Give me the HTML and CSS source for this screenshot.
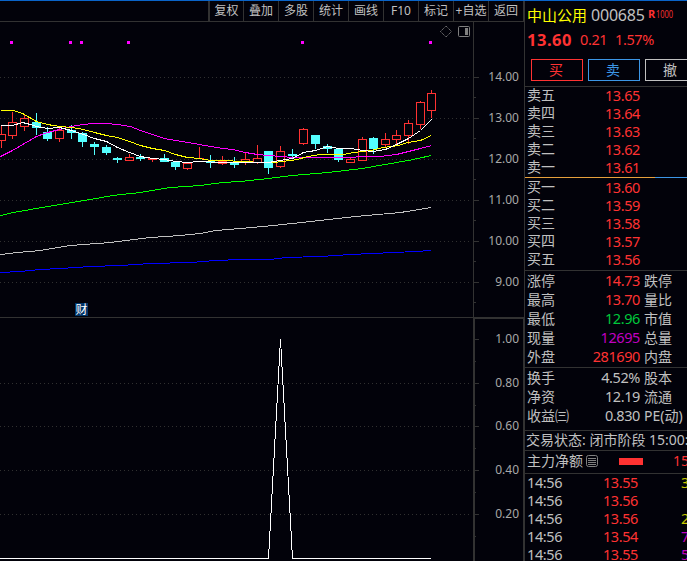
FILE: index.html
```
<!DOCTYPE html>
<html lang="zh-CN">
<head>
    <meta charset="UTF-8">
    <meta name="viewport" content="width=device-width, initial-scale=1.0">
    <title>中山公用 000685</title>
    <link rel="stylesheet" href="styles.css">
</head>
<body>
    <div class="app">
        <div class="main">
            <div class="toolbar">
                <div class="tool">复权</div>
                <div class="tool">叠加</div>
                <div class="tool">多股</div>
                <div class="tool">统计</div>
                <div class="tool">画线</div>
                <div class="tool">F10</div>
                <div class="tool">标记</div>
                <div class="tool">+自选</div>
                <div class="tool">返回</div>
            </div>

            <svg class="chart" width="524" height="295" viewBox="0 22 524 295">
                <g id="price-grid"></g>
                <path class="axis" d="M473.5 22V317"/>
                <g id="candles"></g>
                <g id="averages"></g>
                <g id="signals"></g>
                <path class="icon" d="M440.5 31.5L446 26L451.500 31.500L446 37Z" stroke-dasharray="1.2 .8"/>
                <rect class="icon" x="458.500" y="26.500" width="11" height="10" rx="1"/>
                <rect x="465" y="28" width="3" height="7" fill="#808080"/>
                <rect x="75" y="303" width="13" height="13" fill="#003468"/>
                <text class="badge" x="75.500" y="314">财</text>
            </svg>

            <svg class="chart" width="524" height="244" viewBox="0 317 524 244">
                <g id="signal-grid"></g>
                <path class="axis" d="M0 317.500H473"/>
                <path class="frame" d="M474 561V318H524V561"/>
                <path class="spike" d="M0 558.500H268.500L280.500 339L292.500 558.500H431"/>
            </svg>
        </div>

        <div class="panel">
            <div class="stock">
                <span class="stock-name">中山公用</span>
                <span class="stock-code">000685</span>
                <span class="stock-tag"><b>R</b></span>
                <span class="stock-tag narrow">1000</span>
            </div>
            <div class="quote red">
                <span class="last">13.60</span>
                <span class="change">0.21</span>
                <span class="percent">1.57%</span>
            </div>
            <div class="actions">
                <div class="action red">买</div>
                <div class="action blue">卖</div>
                <div class="action">撤</div>
            </div>

            <div class="block book sells">
                <div class="row"><span>卖五</span><span class="num red">13.65</span></div>
                <div class="row"><span>卖四</span><span class="num red">13.64</span></div>
                <div class="row"><span>卖三</span><span class="num red">13.63</span></div>
                <div class="row"><span>卖二</span><span class="num red">13.62</span></div>
                <div class="row"><span>卖一</span><span class="num red">13.61</span></div>
            </div>
            <div class="ratio"></div>
            <div class="book buys">
                <div class="row"><span>买一</span><span class="num red">13.60</span></div>
                <div class="row"><span>买二</span><span class="num red">13.59</span></div>
                <div class="row"><span>买三</span><span class="num red">13.58</span></div>
                <div class="row"><span>买四</span><span class="num red">13.57</span></div>
                <div class="row"><span>买五</span><span class="num red">13.56</span></div>
            </div>

            <div class="block stats day">
                <div class="row"><span>涨停</span><span class="num red">14.73</span><span>跌停</span></div>
                <div class="row"><span>最高</span><span class="num red">13.70</span><span>量比</span></div>
                <div class="row"><span>最低</span><span class="num green">12.96</span><span>市值</span></div>
                <div class="row"><span>现量</span><span class="num purple">12695</span><span>总量</span></div>
                <div class="row"><span>外盘</span><span class="num red">281690</span><span>内盘</span></div>
            </div>
            <div class="block stats finance">
                <div class="row"><span>换手</span><span class="num">4.52%</span><span>股本</span></div>
                <div class="row"><span>净资</span><span class="num">12.19</span><span>流通</span></div>
                <div class="row"><span>收益㈢</span><span class="num">0.830</span><span>PE(动)</span></div>
            </div>
            <div class="block status">交易状态: 闭市阶段 15:00:</div>
            <div class="block netflow">
                <span>主力净额</span>
                <svg class="list-icon" width="12" height="12" viewBox="0 0 12 12">
                    <rect x=".5" y=".5" width="11" height="11" rx="2"/>
                    <path d="M2 3.500H10M2 5.500H10M2 7.500H10M2 9.500H10"/>
                </svg>
                <span class="flow-bar"></span>
                <span class="red">15</span>
            </div>
            <div class="block ticks">
                <div class="row"><span>14:56</span><span class="num red">13.55</span><span class="vol yellow">3</span></div>
                <div class="row"><span>14:56</span><span class="num red">13.56</span></div>
                <div class="row"><span>14:56</span><span class="num red">13.56</span><span class="vol yellow">2</span></div>
                <div class="row"><span>14:56</span><span class="num red">13.54</span><span class="vol purple">7</span></div>
                <div class="row"><span>14:56</span><span class="num red">13.55</span><span class="vol purple">5</span></div>
            </div>
        </div>
    </div>

    <script src="chart.js"></script>
</body>
</html>
```
FILE: styles.css
```
body {
    margin: 0;
    background-color: #02020a;
    color: #c0c0c0;
    font-family: "Noto Sans", "Noto Sans CJK SC", sans-serif;
    font-size: 14px;
    overflow: hidden;
}
.app {
    display: flex;
    box-sizing: border-box;
    width: 687px;
    height: 561px;
    border-top: 1px solid #0a64c8;
    overflow: hidden;
}
.main {
    width: 524px;
    flex: none;
}
.toolbar {
    display: flex;
    justify-content: flex-end;
    height: 20px;
    border-bottom: 1px solid #323232;
}
.tool {
    box-sizing: border-box;
    width: 35px;
    border-right: 1px solid #323232;
    font-size: 12px;
    line-height: 20px;
    text-align: center;
    white-space: nowrap;
}
.tool:first-child {
    width: 36px;
    border-left: 2px solid #323232;
}
.chart {
    display: block;
    shape-rendering: crispEdges;
}
.axis, .icon, .frame, .spike, .average {
    fill: none;
    stroke: #323232;
}
.icon {
    stroke: #808080;
    shape-rendering: auto;
}
.frame {
    stroke-width: 2;
}
.spike {
    stroke: #fff;
}
.grid {
    stroke: #303030;
    stroke-dasharray: 1 3;
}
.scale {
    fill: #a8a8a8;
    font-size: 12px;
    text-anchor: end;
}
.badge {
    fill: #fff;
    font-size: 12px;
}

.panel {
    width: 162px;
    flex: none;
    border-left: 1px solid #323232;
    overflow: hidden;
    white-space: nowrap;
}
.red { color: #ff3232; }
.green { color: #00c83c; }
.blue { color: #3c96e6; }
.purple { color: #c000c0; }
.yellow { color: #c8c800; }

.stock {
    display: flex;
    height: 29px;
    padding-left: 2px;
    line-height: 29px;
}
.stock-name {
    width: 64px;
    color: #ffff00;
    font-size: 15px;
}
.stock-code {
    width: 57px;
    font-size: 16px;
    letter-spacing: -0.2px;
}
.stock-tag {
    width: 8px;
    color: #ff3232;
    font: 11px/26px "Open Sans", sans-serif;
}
.narrow {
    transform: scaleX(0.68);
    transform-origin: left;
}
.quote {
    display: flex;
    height: 29px;
    padding-left: 2px;
    font-size: 14.5px;
    line-height: 19px;
    letter-spacing: -0.4px;
}
.last {
    width: 53px;
    font-size: 16.5px;
    font-weight: bold;
    letter-spacing: 0.5px;
}
.change {
    width: 35px;
}
.actions {
    display: flex;
    gap: 5px;
    height: 27px;
    padding-left: 6px;
}
.action {
    box-sizing: border-box;
    width: 52px;
    height: 22px;
    flex: none;
    padding-right: 2px;
    border: 1px solid;
    line-height: 20px;
    text-align: center;
}
.block {
    border-top: 1px solid #323232;
}
.row {
    display: flex;
    height: 18px;
    padding-left: 2px;
    line-height: 16px;
}
.row span,
.netflow span {
    flex: none;
}
.num {
    font-size: 14.5px;
    letter-spacing: -0.4px;
    text-align: right;
}
.book .row span:first-child,
.stats .row span:first-child {
    width: 42px;
}
.book .num,
.stats .num {
    width: 71px;
    margin-right: 4px;
}
.sells {
    height: 90px;
}
.ratio {
    height: 1px;
    background: linear-gradient(to right, #e6a03c 130px, #3c96e6 130px);
}
.buys {
    height: 91px;
    padding-top: 1px;
}
.stats .row {
    height: 19px;
    line-height: 17px;
}
.day {
    height: 95px;
    padding-top: 1px;
}
.finance {
    height: 61px;
    padding-top: 1px;
}
.status {
    height: 19px;
    padding-left: 1px;
    line-height: 17px;
}
.netflow {
    display: flex;
    align-items: center;
    height: 20px;
    padding: 0 0 2px 2px;
    line-height: 20px;
}
.list-icon {
    flex: none;
    margin-left: 3px;
    fill: none;
    stroke: #808080;
}
.flow-bar {
    width: 24px;
    height: 7px;
    margin: 0 30px 0 21px;
    background: #ff3232;
}
.ticks .row span:first-child {
    width: 40px;
    font-size: 14.5px;
    letter-spacing: -0.4px;
}
.ticks .num {
    width: 71px;
}
.ticks .vol {
    margin-left: 43px;
    font-size: 14.5px;
}
```
FILE: chart.js
```
// [center x, high, low, body top, body bottom, rising]
const candles = [
    [1, 126, 148, 134, 140, 1], [12, 112, 139, 122, 135, 1], [24, 114, 131, 118, 126, 1],
    [36, 113, 135, 122, 127, 0], [47, 127, 141, 132, 138, 0], [59, 128, 142, 130, 138, 1],
    [71, 125, 139, 130, 132, 0], [82, 132, 147, 133, 141, 0], [94, 142, 155, 144, 146, 0],
    [106, 145, 155, 147, 152, 0], [117, 157, 163, 158, 159, 0], [129, 154, 160, 157, 160, 1],
    [140, 154, 161, 157, 158, 0], [152, 158, 162, 158, 159, 1], [164, 154, 161, 158, 161, 0],
    [175, 161, 170, 162, 166, 0], [187, 163, 170, 163, 168, 1], [199, 147, 158, 158, 158, 1],
    [210, 155, 168, 161, 162, 0], [222, 156, 165, 161, 163, 1], [234, 157, 168, 162, 164, 0],
    [245, 153, 165, 159, 162, 1], [257, 145, 164, 158, 162, 1], [268, 151, 174, 151, 167, 0],
    [280, 146, 168, 151, 166, 1], [292, 149, 158, 154, 155, 0], [303, 128, 145, 129, 143, 1],
    [315, 135, 149, 135, 143, 0], [327, 144, 153, 146, 148, 0], [338, 149, 162, 149, 159, 0],
    [350, 158, 163, 159, 162, 1], [362, 137, 160, 139, 160, 1], [373, 137, 154, 138, 148, 0],
    [385, 133, 147, 139, 144, 1], [396, 130, 144, 135, 139, 1], [408, 120, 144, 123, 135, 1],
    [420, 101, 129, 102, 124, 1], [431, 90, 118, 93, 110, 1]
];

const averages = {
    '#0000ff': '0,272 20,271 40,269 60,268 90,266 120,265 150,263 190,262 215,260 240,259 270,259 285,257 320,256 350,254 415,251 431,250',
    '#c0c0c0': '0,254 17,252 40,250 70,245 110,242 125,240 150,237 180,235 200,233 215,230 240,228 273,225 310,221 355,216 400,212 431,207',
    '#00ff00': '0,215 13,212 30,209 60,204 90,199 112,195 140,192 170,187 200,185 222,182 240,181 268,178 292,175 327,172 362,168 373,166 396,162 408,160 431,155',
    '#ff00ff': '0,156 12,150 24,143 36,136 47,132 59,129 71,126 82,124 94,123 106,123 117,124 130,126 140,130 152,134 164,138 175,140 187,142 199,144 210,146 222,148 232,149 245,152 257,154 268,155 280,156 292,157 350,157 362,156 380,156 396,154 408,151 420,148 431,145',
    '#ffff00': '0,110 13,110 22,113 36,121 47,124 59,126 71,127 83,129 94,132 106,135 117,137 129,141 140,145 152,148 164,150 175,154 187,157 199,158 210,160 222,160 262,162 274,162 297,159 307,156 320,154 343,154 353,152 370,150 383,147 398,145 407,142 420,140 431,135',
    '#ffffff': '0,125 12,125 22,122 30,124 36,126 47,128 59,127 71,130 83,134 94,138 106,141 117,147 129,152 140,156 152,158 164,159 175,161 187,162 199,161 222,162 268,162 280,160 292,158 303,152 315,150 327,146 338,148 350,148 362,150 373,151 385,149 396,144 408,138 420,130 431,119'
};

const signals = [10, 69, 80, 127, 301, 429];

function rect(x, y, w, h, fill) {
    return `<rect x="${x}" y="${y}" width="${w}" height="${h}" fill="${fill}"/>`;
}

function drawCandle([x, high, low, top, bottom, rising]) {
    const color = rising ? '#ff3232' : '#54ffff';
    const wick = rect(x, high, 1, low - high + 1 - (low > bottom ? 1 : 0), color);
    const body = rect(x - 4, top, 9, bottom - top + 1, color);
    const hole = rising && bottom - top > 1 ? rect(x - 3, top + 1, 7, bottom - top - 1, '#02020a') : '';
    return wick + body + hole;
}

function drawScale(levels, minorStep) {
    return levels.map(([y, label, grid]) => `
        ${grid ? `<path class="grid" d="M0 ${y + .5}H471"/>` : ''}
        <path class="axis" d="M474 ${y + .5}H479"/>
        <path class="axis" d="M474 ${y + minorStep + .5}H476"/>
        <text class="scale" x="519" y="${y + 4}">${label}</text>`).join('');
}

document.getElementById('price-grid').innerHTML = drawScale([
    [77, '14.00', 1], [118, '13.00', 1], [159, '12.00', 1],
    [200, '11.00', 1], [241, '10.00', 1], [282, '9.00', 1]
], 20);

document.getElementById('signal-grid').innerHTML = drawScale([
    [339, '1.00', 0], [383, '0.80', 1], [426, '0.60', 1], [470, '0.40', 1], [514, '0.20', 1]
], 22);

document.getElementById('candles').innerHTML = candles.map(drawCandle).join('');

document.getElementById('averages').innerHTML = Object.entries(averages).map(([color, points]) =>
    `<polyline class="average" transform="translate(.5 .5)" style="stroke: ${color}" points="${points}"/>`).join('');

document.getElementById('signals').innerHTML = signals.map(x => rect(x, 41, 3, 3, '#ff00ff')).join('');
```
